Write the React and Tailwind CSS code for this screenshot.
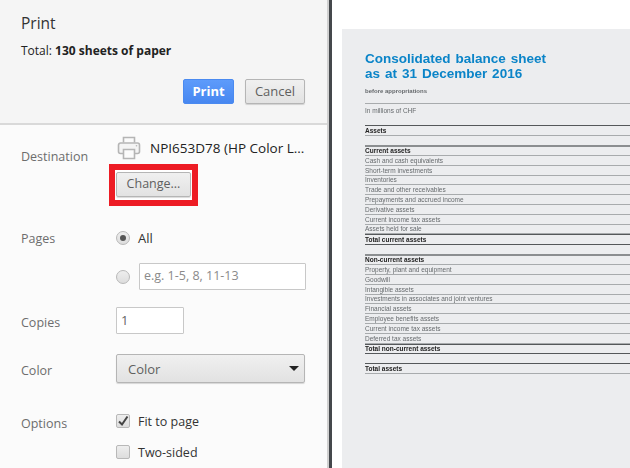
const leftFont = { fontFamily: '"Open Sans", sans-serif' }

function Row({ label, bold, h = 'h-[9.8px]', border = 'border-[#a8abad]' }) {
  return (
    <div className={`${h} border-b ${border} flex items-end`}>
      <span className={`text-[6.5px] leading-[9px] whitespace-nowrap ${bold ? 'font-bold text-[#222]' : 'text-[#666a6d]'}`}>{label}</span>
    </div>
  )
}

function SettingRow({ label, className, children }) {
  return (
    <div className={`flex ${className}`}>
      <div className="w-[95px] pl-[21px] text-[12.5px] text-[#6d6d6d] shrink-0">{label}</div>
      <div className="flex-1 min-w-0">{children}</div>
    </div>
  )
}

function PrinterIcon() {
  return (
    <svg className="shrink-0" width="24" height="24" viewBox="0 0 24 24" fill="none" stroke="#b5b5b5" strokeWidth="1.6">
      <path d="M6.5 6.5V1.5h11v5" />
      <path d="M6 17.5H3.5a2 2 0 0 1-2-2V9a2 2 0 0 1 2-2h17a2 2 0 0 1 2 2v6.5a2 2 0 0 1-2 2H18" fill="#f4f4f4" />
      <path d="M6.5 13.5h11v9h-11z" fill="#fbfbfb" />
      <circle cx="19.5" cy="9.8" r="0.8" fill="#b5b5b5" stroke="none" />
    </svg>
  )
}

const btn = 'border border-[#b5b5b5] rounded-[2px] bg-gradient-to-b from-[#f0f0f0] to-[#e2e2e2] shadow-[0_1px_1px_rgba(0,0,0,0.15)] text-[#5f5f5f]'

export default function App() {
  return (
    <div className="flex w-[630px] h-[468px] overflow-hidden bg-white">
      <div className="w-[327px] shrink-0 bg-[#fbfbfb] text-[13px] leading-[18px]" style={leftFont}>
        <div className="h-[125px] bg-[#f5f5f5] border-b-2 border-[#d9d9d9] flex flex-col">
          <h1 className="pl-[21px] pt-[13px] text-[15.5px] leading-[20px] text-[#333]">Print</h1>
          <p className="pl-[21px] pt-[9px] text-[12px] leading-[18px] text-[#222]">
            Total: <span className="font-bold">130 sheets of paper</span>
          </p>
          <div className="flex justify-end gap-[11px] pr-[22px] pt-[19px]">
            <button className="w-[51px] h-[25px] rounded-[2px] border border-[#4a8af0] bg-gradient-to-b from-[#5d9bfb] to-[#4787f0] text-white font-bold text-[13px] leading-none">Print</button>
            <button className={`${btn} w-[60px] h-[25px] text-[13px] leading-none`}>Cancel</button>
          </div>
        </div>

        <SettingRow label={<span className="block pt-[23px]">Destination</span>} className="h-[99px]">
          <div className="flex items-center gap-[9px] pt-[11px] pl-[22px]">
            <PrinterIcon />
            <span className="text-[13.5px] leading-[24px] text-[#222] whitespace-nowrap">NPI653D78 (HP Color L...</span>
          </div>
          <div className="ml-[14px] mt-[4px] w-[89px] h-[42px] border-[6px] border-[#ed1c24] bg-white pt-[2px] pl-[1px]">
            <button className={`${btn} w-[75px] h-[25px] text-[12.5px] leading-none`}>Change...</button>
          </div>
        </SettingRow>

        <SettingRow label={<span className="block pt-[1px]">Pages</span>} className="pt-[5px]">
          <div className="flex items-center gap-[8px] pl-[21px] h-[18px]">
            <span className="w-[14px] h-[14px] rounded-full border border-[#b8b8b8] bg-gradient-to-b from-[#eee] to-[#ddd] flex items-center justify-center">
              <span className="w-[6px] h-[6px] rounded-full bg-[#555]" />
            </span>
            <span className="text-[#333]">All</span>
          </div>
          <div className="flex items-center gap-[9px] pl-[21px] mt-[16px]">
            <span className="w-[14px] h-[14px] rounded-full border border-[#b8b8b8] bg-gradient-to-b from-[#eee] to-[#ddd]" />
            <div className="w-[167px] h-[27px] border border-[#c8c8c8] rounded-[1px] bg-white pl-[4px] text-[#8a8a8a] text-[12.5px] leading-[24px]">e.g. 1-5, 8, 11-13</div>
          </div>
        </SettingRow>

        <SettingRow label={<span className="block pt-[7px]">Copies</span>} className="mt-[17px]">
          <div className="ml-[21px] w-[68px] h-[27px] border border-[#c8c8c8] rounded-[1px] bg-white pl-[4px] text-[#666] leading-[24px]">1</div>
        </SettingRow>

        <SettingRow label={<span className="block pt-[8px]">Color</span>} className="mt-[20px]">
          <div className={`${btn} ml-[21px] w-[189px] h-[29px] flex items-center justify-between pl-[11px] pr-[5px]`}>
            <span>Color</span>
            <span className="w-0 h-0 border-x-[5px] border-x-transparent border-t-[5px] border-t-[#222]" />
          </div>
        </SettingRow>

        <SettingRow label={<span className="block pt-[5px]">Options</span>} className="mt-[27px]">
          <div className="flex items-center gap-[8px] pl-[21px] h-[22px]">
            <span className="w-[14px] h-[14px] rounded-[2px] border border-[#b8b8b8] bg-gradient-to-b from-[#eee] to-[#ddd] flex items-center justify-center">
              <svg width="12" height="12" viewBox="0 0 12 12" fill="none" stroke="#444" strokeWidth="2"><path d="M2 6.5l3 3 5.5-8" /></svg>
            </span>
            <span className="block pt-[1px] text-[12.5px] text-[#333]">Fit to page</span>
          </div>
          <div className="flex items-center gap-[8px] pl-[21px] h-[22px] mt-[9px]">
            <span className="w-[14px] h-[14px] rounded-[2px] border border-[#b8b8b8] bg-gradient-to-b from-[#eee] to-[#ddd]" />
            <span className="block pt-[2px] text-[12.5px] text-[#333]">Two-sided</span>
          </div>
        </SettingRow>
      </div>

      <div className="w-[2px] shrink-0 bg-[#d0d0d0]" />
      <div className="w-[3px] shrink-0 bg-[#45484c]" />

      <div className="flex-1 min-w-0 pl-[10px] pt-[29px] overflow-hidden" style={{ fontFamily: '"Liberation Sans", sans-serif' }}>
        <div className="h-[439px] bg-[#ecedef] pl-[23px] pt-[22px]">
          <div className="blur-[0.3px]">
            <h2 className="text-[#0a84c8] font-bold text-[13.5px] leading-[15px] [word-spacing:1.2px]">
              Consolidated balance sheet<br />as at 31 December 2016
            </h2>
            <p className="text-[6px] leading-[8px] font-bold text-[#666a6d] mt-[6px] pb-[8px] border-b border-[#a8abad]">before appropriations</p>
            <p className="text-[6.5px] leading-[9px] text-[#666a6d] mt-[2px]">In millions of CHF</p>
            <div className="mt-[10px] border-t border-[#55585a]">
              <Row label="Assets" bold h="h-[10px]" />
            </div>
            <div className="mt-[9px] border-t-2 border-[#8b8e90]">
              <Row label="Current assets" bold h="h-[9px]" />
              {['Cash and cash equivalents', 'Short-term investments', 'Inventories', 'Trade and other receivables', 'Prepayments and accrued income', 'Derivative assets', 'Current income tax assets', 'Assets held for sale'].map((t) => <Row key={t} label={t} />)}
              <div className="border-t border-[#55585a]">
                <Row label="Total current assets" bold border="border-[#55585a]" />
              </div>
            </div>
            <div className="mt-[9px] border-t-2 border-[#8b8e90]">
              <Row label="Non-current assets" bold h="h-[9px]" />
              {['Property, plant and equipment', 'Goodwill', 'Intangible assets', 'Investments in associates and joint ventures', 'Financial assets', 'Employee benefits assets', 'Current income tax assets', 'Deferred tax assets'].map((t) => <Row key={t} label={t} />)}
              <div className="border-t border-[#55585a]">
                <Row label="Total non-current assets" bold border="border-[#55585a]" />
              </div>
            </div>
            <div className="mt-[9px] border-t border-[#55585a]">
              <Row label="Total assets" bold />
            </div>
          </div>
        </div>
      </div>
    </div>
  )
}
